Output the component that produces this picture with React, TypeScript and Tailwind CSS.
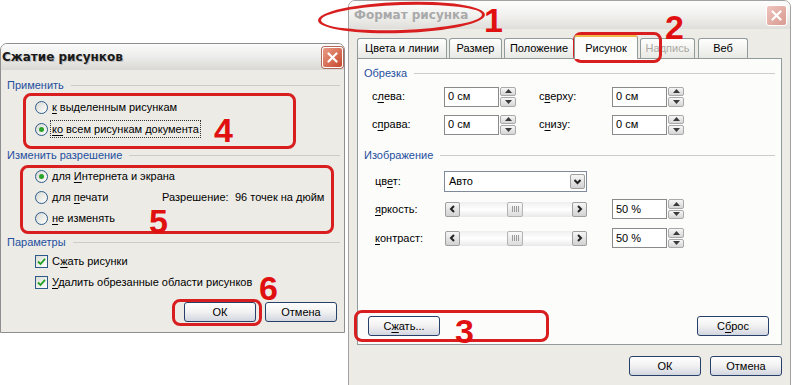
import React from 'react';

const ui = '[font-family:"Liberation_Sans",Arial,sans-serif]';

const U = ({ children }: { children: React.ReactNode }) => (
  <span className="underline underline-offset-[2px] decoration-[1px]">{children}</span>
);

const CloseBtn = ({ faded }: { faded?: boolean }) => (
  <div
    className={
      faded
        ? 'w-[21px] h-[21px] rounded-[3px] border border-white bg-gradient-to-br from-[#eec4bd] to-[#d89a90] flex items-center justify-center'
        : 'w-[21px] h-[21px] rounded-[3px] border border-white bg-gradient-to-br from-[#e99a86] to-[#c6462a] flex items-center justify-center shadow-[0_0_0_1px_#b06a5c]'
    }
  >
    <svg width="11" height="11" viewBox="0 0 11 11">
      <path d="M1.5 1.5 L9.5 9.5 M9.5 1.5 L1.5 9.5" stroke="white" strokeWidth="2.2" strokeLinecap="round" />
    </svg>
  </div>
);

const Section = ({ title }: { title: string }) => (
  <div className="flex items-center h-[16px] text-[#1f4f9e]">
    <span>{title}</span>
    <div className="flex-1 ml-[7px] h-px bg-[#cdccc6]" />
  </div>
);

const Radio = ({ checked, focus, children }: { checked?: boolean; focus?: boolean; children: React.ReactNode }) => (
  <div className="flex items-center">
    <span className="w-[13px] h-[13px] rounded-full border border-[#2c5b8a] bg-gradient-to-br from-[#d8d8d2] to-white flex items-center justify-center">
      {checked && <span className="w-[5px] h-[5px] rounded-full bg-[#2aa22a]" />}
    </span>
    <span className={focus ? 'ml-[3px] px-[1px] outline outline-1 outline-dotted outline-[#333]' : 'ml-[4px]'}>{children}</span>
  </div>
);

const Check = ({ children }: { children: React.ReactNode }) => (
  <div className="flex items-center">
    <span className="w-[13px] h-[13px] border border-[#2c5b8a] bg-gradient-to-br from-[#dcdcd6] to-white flex items-center justify-center">
      <svg width="9" height="9" viewBox="0 0 9 9">
        <path d="M1 4.5 L3.5 7 L8 1.8" stroke="#21a121" strokeWidth="1.8" fill="none" />
      </svg>
    </span>
    <span className="ml-[4px]">{children}</span>
  </div>
);

const Btn = ({ children, className = '' }: { children: React.ReactNode; className?: string }) => (
  <div
    className={`flex items-center justify-center w-[72px] h-[20px] rounded-[3px] border border-[#27406a] bg-gradient-to-b from-white via-[#f1f1f1] to-[#d3d6e0] text-black ${className}`}
  >
    {children}
  </div>
);

// up/down spinner next to a number box
const Spin = () => (
  <div className="w-[16px] h-[20px] ml-[1px] flex flex-col gap-px">
    {[0, 1].map((i) => (
      <div
        key={i}
        className="flex-1 rounded-[2px] border border-[#a9a9a9] bg-gradient-to-b from-[#f7f7f7] to-[#d6d6d6] flex items-center justify-center"
      >
        <svg width="7" height="4" viewBox="0 0 7 4">
          <path d={i === 0 ? 'M0 4 L3.5 0 L7 4 Z' : 'M0 0 L3.5 4 L7 0 Z'} fill="#3a3a3a" />
        </svg>
      </div>
    ))}
  </div>
);

const Box = ({ value }: { value: string }) => (
  <div className="w-[55px] h-[20px] border border-[#8a8a8a] bg-white flex items-center pl-[3px]">{value}</div>
);

const Arrow = ({ dir }: { dir: 'l' | 'r' | 'd' }) => (
  <div className="w-[15px] h-[15px] rounded-[2px] border border-[#9f9f9f] bg-gradient-to-b from-[#f6f6f6] to-[#d2d2d2] flex items-center justify-center">
    <svg width="7" height="8" viewBox="0 0 7 8">
      <path
        d={dir === 'l' ? 'M5 1 L2 4 L5 7' : dir === 'r' ? 'M2 1 L5 4 L2 7' : 'M0.5 2 L3.5 5 L6.5 2'}
        stroke="#222"
        strokeWidth="2"
        fill="none"
      />
    </svg>
  </div>
);

const Scroll = () => (
  <div className="ml-[1px] w-[142px] h-[15px] flex items-center bg-gradient-to-b from-[#efefef] via-white to-[#e9e9e9]">
    <Arrow dir="l" />
    <div className="ml-[47px] w-[16px] h-[15px] rounded-[2px] border border-[#b3b3b3] bg-gradient-to-b from-[#fafafa] to-[#dcdcdc] flex items-center justify-center gap-px">
      {[0, 1, 2, 3].map((i) => (
        <div key={i} className="w-px h-[6px] bg-[#9a9a9a]" />
      ))}
    </div>
    <div className="flex-1" />
    <Arrow dir="r" />
  </div>
);

const Tab = ({ w, active, disabled, children }: { w: string; active?: boolean; disabled?: boolean; children: React.ReactNode }) => (
  <div
    className={
      active
        ? `${w} h-[24px] -mb-px z-10 rounded-t-[3px] border border-b-0 border-[#919b9c] border-t-[#f0b94a] border-t-2 bg-[#fcfcfb] flex items-center justify-center text-black`
        : `${w} h-[20px] rounded-t-[3px] border border-b-0 border-[#919b9c] bg-gradient-to-b from-white to-[#e8e8e4] flex items-center justify-center ${disabled ? 'text-[#aaa9a2]' : 'text-black'}`
    }
  >
    {children}
  </div>
);

const Red = ({ className }: { className: string }) => (
  <div className={`absolute border-[3px] border-[#d81e1e] ${className}`} />
);

const Num = ({ n, className }: { n: string; className: string }) => (
  <div className={`absolute text-[34px] leading-none font-bold text-[#e01010] ${className}`}>{n}</div>
);

export default function App() {
  return (
    <div className={`relative w-[794px] h-[385px] bg-white overflow-hidden text-[11px] text-black ${ui}`}>
      {/* Формат рисунка */}
      <div className="absolute left-[348px] top-0 w-[443px] h-[400px] rounded-t-[7px] border border-[#a2a2a2] bg-[#ecebe6] flex flex-col">
        <div className="h-[28px] flex items-center justify-between pl-[5px] pr-[3px] rounded-t-[6px] bg-gradient-to-b from-[#fdfdfd] via-[#f1f1ef] to-[#dfdeda]">
          <span className='[font-family:"DejaVu_Sans",sans-serif] text-[12px] font-bold text-[#a9a9a9]'>Формат рисунка</span>
          <CloseBtn faded />
        </div>
        <div className="px-[8px] flex flex-col">
          <div className="h-[29px] flex items-end">
            <Tab w="w-[90px]">Цвета и линии</Tab>
            <div className="w-[2px]" />
            <Tab w="w-[53px]">Размер</Tab>
            <div className="w-[2px]" />
            <Tab w="w-[70px]">Положение</Tab>
            <Tab w="w-[64px]" active>
              Рисунок
            </Tab>
            <div className="w-[2px]" />
            <Tab w="w-[55px]" disabled>
              Надпись
            </Tab>
            <div className="w-[3px]" />
            <Tab w="w-[50px]">Веб</Tab>
          </div>
          <div className="h-[287px] border border-[#919b9c] bg-[#fcfcfb] flex flex-col px-[6px] pt-[6px] pb-[8px]">
            <Section title="Обрезка" />
            <div className="mt-[5px] flex flex-col gap-[7px]">
              {[
                [<>с<U>л</U>ева:</>, <>с<U>в</U>ерху:</>],
                [<>с<U>п</U>рава:</>, <>с<U>н</U>изу:</>],
              ].map(([a, b], i) => (
                <div key={i} className="h-[21px] flex items-center pl-[8px]">
                  <span className="w-[72px]">{a}</span>
                  <Box value="0 см" />
                  <Spin />
                  <span className="ml-[23px] w-[73px]">{b}</span>
                  <Box value="0 см" />
                  <Spin />
                </div>
              ))}
            </div>
            <div className="mt-[12px]">
              <Section title="Изображение" />
            </div>
            <div className="mt-[8px] h-[21px] flex items-center pl-[11px]">
              <span className="w-[69px]">
                цв<U>е</U>т:
              </span>
              <div className="w-[143px] h-[21px] border border-[#7f8a9a] bg-white flex items-center justify-between">
                <span className="pl-[4px]">Авто</span>
                <div className="h-full flex items-center pr-px">
                  <Arrow dir="d" />
                </div>
              </div>
            </div>
            {[
              [<><U>я</U>ркость:</>, 'mt-[8px]'],
              [<><U>к</U>онтраст:</>, 'mt-[11px]'],
            ].map(([l, m], i) => (
              <div key={i} className={`${m} h-[18px] flex items-center pl-[11px]`}>
                <span className="w-[69px]">{l}</span>
                <Scroll />
                <div className="ml-[25px]">
                  <Box value="50 %" />
                </div>
                <Spin />
              </div>
            ))}
            <div className="flex-1" />
            <div className="flex justify-between pl-[4px] pr-[6px]">
              <Btn>
                С<U>ж</U>ать...
              </Btn>
              <Btn>
                С<U>б</U>рос
              </Btn>
            </div>
          </div>
          <div className="mt-[11px] flex justify-end gap-[9px]">
            <Btn>ОК</Btn>
            <Btn>Отмена</Btn>
          </div>
        </div>
      </div>

      {/* Сжатие рисунков */}
      <div className="absolute left-0 top-[43px] w-[345px] h-[290px] rounded-t-[7px] border border-[#8f8f8f] bg-[#ecebe6] flex flex-col">
        <div className="h-[26px] flex items-center justify-between pl-[1px] pr-[1px] rounded-t-[6px] bg-gradient-to-b from-[#fbfbfb] via-[#ececea] to-[#d9d8d4]">
          <span className='[font-family:"DejaVu_Sans",sans-serif] text-[12px] font-bold text-[#1a1a1a] [text-shadow:1px_1px_0_#bdbdbd]'>
            Сжатие рисунков
          </span>
          <CloseBtn />
        </div>
        <div className="flex flex-col pl-[6px] pr-[4px] pt-[7px]">
          <Section title="Применить" />
          <div className="mt-[3px] pl-[28px] flex flex-col">
            <div className="h-[22px] flex items-center">
              <Radio>
                <U>к</U> выделенным рисункам
              </Radio>
            </div>
            <div className="h-[22px] flex items-center">
              <Radio checked focus>
                <U>ко</U> всем рисункам документа
              </Radio>
            </div>
          </div>
          <div className="mt-[7px]">
            <Section title="Изменить разрешение" />
          </div>
          <div className="mt-[3px] pl-[28px] flex flex-col">
            <div className="h-[21px] flex items-center">
              <Radio checked>
                для <U>И</U>нтернета и экрана
              </Radio>
            </div>
            <div className="h-[21px] flex items-center">
              <div className="w-[127px]">
                <Radio>
                  для <U>п</U>ечати
                </Radio>
              </div>
              <span className="w-[73px]">Разрешение:</span>
              <span>96 точек на дюйм</span>
            </div>
            <div className="h-[21px] flex items-center">
              <Radio>
                <U>н</U>е изменять
              </Radio>
            </div>
          </div>
          <div className="mt-[5px]">
            <Section title="Параметры" />
          </div>
          <div className="mt-px pl-[28px] flex flex-col">
            <div className="h-[21px] flex items-center">
              <Check>
                С<U>ж</U>ать рисунки
              </Check>
            </div>
            <div className="h-[21px] flex items-center">
              <Check>
                <U>У</U>далить обрезанные области рисунков
              </Check>
            </div>
          </div>
          <div className="mt-[9px] flex justify-end gap-[9px] pr-[3px]">
            <Btn>ОК</Btn>
            <Btn>Отмена</Btn>
          </div>
        </div>
      </div>

      {/* annotations */}
      <div className="absolute left-[318px] top-[2px] w-[167px] h-[31px] rounded-[50%] border-[3px] border-[#d81e1e] -rotate-[2deg]" />
      <Red className="left-[573px] top-[32px] w-[89px] h-[31px] rounded-[8px]" />
      <Red className="left-[354px] top-[310px] w-[195px] h-[32px] rounded-[8px]" />
      <Red className="left-[23px] top-[93px] w-[273px] h-[56px] rounded-[8px]" />
      <Red className="left-[20px] top-[165px] w-[314px] h-[69px] rounded-[8px]" />
      <Red className="left-[172px] top-[299px] w-[90px] h-[27px] rounded-[8px]" />
      <Num n="1" className="left-[484px] top-[3px]" />
      <Num n="2" className="left-[665px] top-[10px]" />
      <Num n="3" className="left-[455px] top-[314px]" />
      <Num n="4" className="left-[214px] top-[113px] text-[31px]" />
      <Num n="5" className="left-[149px] top-[204px] text-[31px]" />
      <Num n="6" className="left-[259px] top-[271px]" />
    </div>
  );
}
